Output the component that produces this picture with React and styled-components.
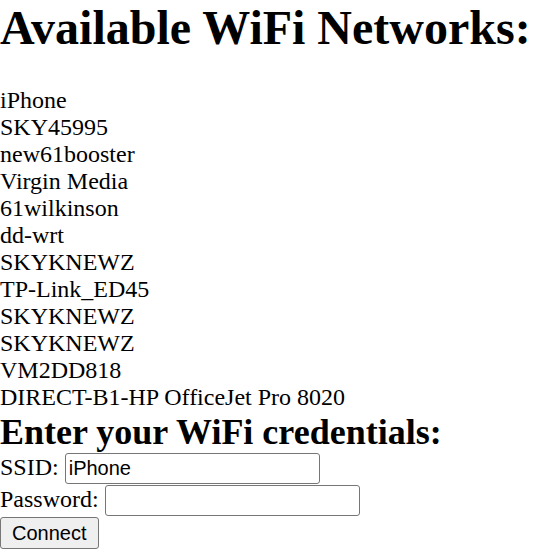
import React from "react";
import styled, { createGlobalStyle } from "styled-components";

const Global = createGlobalStyle`
  html, body { margin: 0; padding: 0; background: #fff; }
  body { font-family: "Liberation Serif", "Times New Roman", serif; font-size: 24px; color: #000; }
`;

const Title = styled.h1`
  font-size: 48px;
  font-weight: bold;
  margin: 0 0 32px;
  line-height: 55px;
`;

const List = styled.div`
  display: flex;
  flex-direction: column;
`;

const Item = styled.div`
  line-height: 27px;
`;

const Subtitle = styled.h2`
  font-size: 36px;
  font-weight: bold;
  margin: 0;
  line-height: 42px;
`;

const Form = styled.form`
  display: flex;
  flex-direction: column;
  align-items: flex-start;
`;

const Row = styled.div`
  display: flex;
  align-items: flex-start;
  gap: 6px;
  height: 32px;
  line-height: 29px;
`;

const Input = styled.input`
  box-sizing: border-box;
  width: 255px;
  height: 31px;
  padding: 0 3px;
  border: 1px solid #767676;
  border-radius: 3px;
  font-family: "Liberation Sans", Arial, sans-serif;
  font-size: 20px;
  color: #000;
  background: #fff;
  margin: 0;
`;

const Button = styled.button`
  box-sizing: border-box;
  height: 32px;
  padding: 0 11px;
  border: 1px solid #767676;
  border-radius: 3px;
  background: #efefef;
  font-family: "Liberation Sans", Arial, sans-serif;
  font-size: 20px;
  color: #000;
  margin: 0;
`;

const networks = [
  "iPhone",
  "SKY45995",
  "new61booster",
  "Virgin Media",
  "61wilkinson",
  "dd-wrt",
  "SKYKNEWZ",
  "TP-Link_ED45",
  "SKYKNEWZ",
  "SKYKNEWZ",
  "VM2DD818",
  "DIRECT-B1-HP OfficeJet Pro 8020",
];

export default function App() {
  return (
    <>
      <Global />
      <Title>Available WiFi Networks:</Title>
      <List>
        {networks.map((n, i) => (
          <Item key={i}>{n}</Item>
        ))}
      </List>
      <Subtitle>Enter your WiFi credentials:</Subtitle>
      <Form onSubmit={(e) => e.preventDefault()}>
        <Row>
          <span>SSID:</span>
          <Input type="text" defaultValue="iPhone" />
        </Row>
        <Row>
          <span>Password:</span>
          <Input type="password" />
        </Row>
        <Button type="submit">Connect</Button>
      </Form>
    </>
  );
}
